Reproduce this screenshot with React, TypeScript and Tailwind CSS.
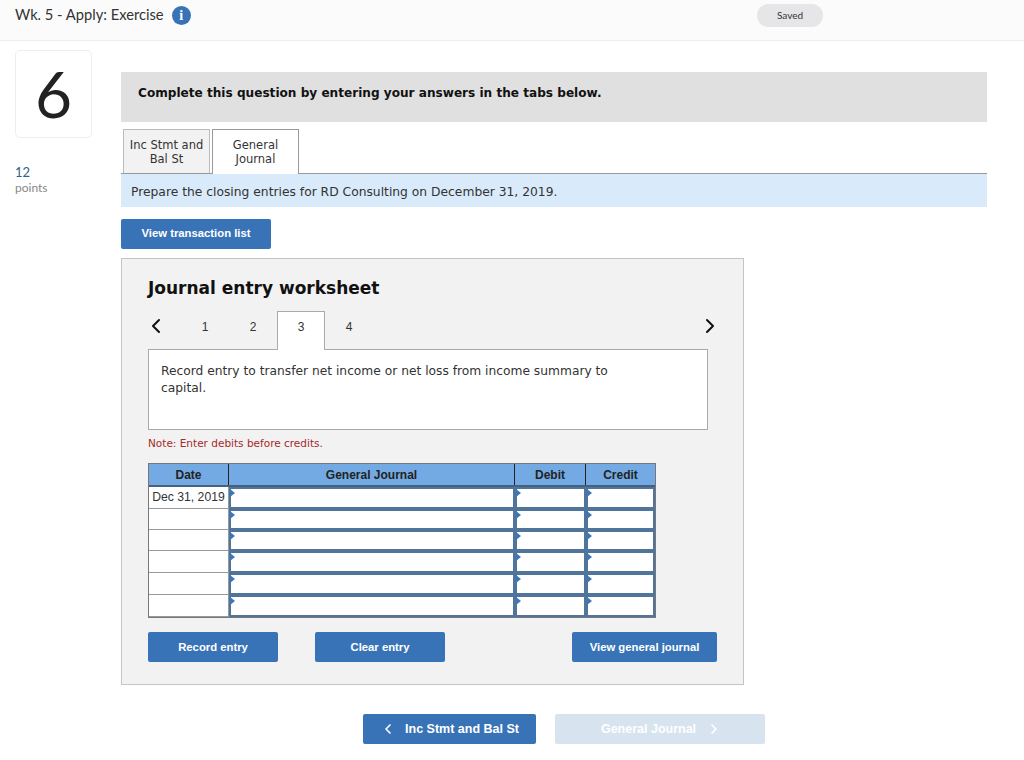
import { ChevronLeft, ChevronRight } from 'lucide-react';

const rows = [
    { date: 'Dec 31, 2019', height: 'h-[22px]' },
    { date: '', height: 'h-[21px]' },
    { date: '', height: 'h-[21px]' },
    { date: '', height: 'h-[22px]' },
    { date: '', height: 'h-[22px]' },
    { date: '', height: 'h-[22px]' },
];

const verdana = "font-['DejaVu_Sans',sans-serif]";
const arial = "font-['Liberation_Sans',sans-serif]";
const lato = "font-['Lato',sans-serif]";

function EntryCell({ width }: { width: string }) {
    return (
        <div className={`relative ${width} h-full bg-white border-2 border-[#4f759c]`}>
            <span className="absolute -left-[1px] top-0 w-0 h-0 border-y-[4px] border-y-transparent border-l-[5px] border-l-[#3b76b8]" />
        </div>
    );
}

function BlueButton({ label, width }: { label: string; width: string }) {
    return (
        <button className={`${width} h-[30px] bg-[#3973b7] rounded-[2px] text-white text-[11.3px] font-bold ${arial}`}>
            {label}
        </button>
    );
}

export default function App() {
    return (
        <div className="w-[1024px] h-[760px] bg-white overflow-hidden text-[#222]">
            {/* TOP BAR */}
            <div className="h-[41px] bg-[#fbfbfb] border-b border-[#eeeeee] flex items-start pl-[15px] pr-[201px]">
                <span className={`${lato} text-[14.7px] leading-[15px] mt-[7px] text-[#333]`}>Wk. 5 - Apply: Exercise</span>
                <span className="ml-[8px] mt-[6px] w-[19px] h-[19px] rounded-full bg-[#3973b7] text-white flex items-center justify-center text-[14px] font-bold font-['Liberation_Serif',serif]">
                    i
                </span>
                <span className={`ml-auto mt-[4px] w-[66px] h-[23px] rounded-full bg-[#e6e5e8] flex items-center justify-center text-[10px] text-[#333] ${lato}`}>
                    Saved
                </span>
            </div>

            <div className="flex">
                {/* LEFT COLUMN */}
                <div className="w-[121px] shrink-0 pl-[15px] pt-[9px]">
                    <div className={`w-[77px] h-[88px] border border-[#eeeeee] rounded-[5px] flex items-center justify-center text-[64px] leading-none text-[#222] ${lato}`}>
                        6
                    </div>
                    <div className={`mt-[26px] text-[13px] leading-[16px] text-[#2d5f8f] ${lato}`}>12</div>
                    <div className={`text-[12px] leading-[16px] text-[#888] ${lato}`}>points</div>
                </div>

                {/* MAIN COLUMN */}
                <div className={`w-[866px] pt-[31px] ${verdana}`}>
                    <div className="h-[50px] bg-[#e0e0e0] flex items-center pl-[17px] pb-[8px] text-[12.1px] font-bold text-[#111]">
                        Complete this question by entering your answers in the tabs below.
                    </div>

                    <div className="flex gap-[2px] pl-[2px] mt-[7px] h-[45px] border-b border-[#999]">
                        <div className="w-[87px] h-[44px] bg-[#f2f2f2] border border-b-0 border-[#bbbbbb] flex items-center justify-center text-center text-[11.5px] leading-[14px] text-[#333]">
                            Inc Stmt and<br />Bal St
                        </div>
                        <div className="w-[87px] h-[45px] bg-white border border-b-0 border-[#999] flex items-center justify-center text-center text-[11.5px] leading-[14px] text-[#333]">
                            General<br />Journal
                        </div>
                    </div>

                    <div className="h-[33px] bg-[#d9ebfa] flex items-center pl-[10px] pt-[4px] text-[12.3px] text-[#333]">
                        Prepare the closing entries for RD Consulting on December 31, 2019.
                    </div>

                    <div className="mt-[12px]">
                        <button className={`w-[150px] h-[30px] pb-[1px] bg-[#3973b7] rounded-[2px] text-white text-[11.3px] font-bold ${arial}`}>
                            View transaction list
                        </button>
                    </div>

                    {/* WORKSHEET */}
                    <div className="mt-[9px] w-[623px] h-[427px] bg-[#f2f2f2] border border-[#c4c4c4] pl-[26px] pr-[35px] pt-[17px]">
                        <h2 className="text-[17px] leading-[24px] font-bold text-[#111]">Journal entry worksheet</h2>

                        <div className={`mt-[11px] h-[39px] flex relative z-10 ${arial} text-[12px] text-[#333]`}>
                            <div className="w-[33px] h-[29px] flex items-center">
                                <ChevronLeft className="w-[24px] h-[24px] -ml-[4px] shrink-0 text-[#111]" strokeWidth={2} />
                            </div>
                            {['1', '2', '3', '4'].map(n => (
                                <div
                                    key={n}
                                    className={
                                        n === '3'
                                            ? 'w-[48px] h-[39px] bg-white border border-b-0 border-[#aaaaaa] flex justify-center pt-[8px] leading-[14px]'
                                            : 'w-[48px] h-[29px] flex justify-center pt-[9px] leading-[14px]'
                                    }
                                >
                                    {n}
                                </div>
                            ))}
                            <div className="ml-auto h-[29px] flex items-center">
                                <ChevronRight className="w-[24px] h-[24px] -mr-[14px] shrink-0 text-[#111]" strokeWidth={2} />
                            </div>
                        </div>

                        <div className="-mt-[1px] w-[560px] h-[81px] bg-white border border-[#aaaaaa] pl-[12px] pt-[13px] pr-[90px] text-[12.25px] leading-[17px] text-[#333]">
                            Record entry to transfer net income or net loss from income summary to capital.
                        </div>

                        <div className="mt-[6px] text-[10.5px] leading-[14px] text-[#a52a2a]">Note: Enter debits before credits.</div>

                        {/* TABLE */}
                        <div className={`mt-[13px] w-[508px] border border-[#777] ${arial}`}>
                            <div className="flex h-[23px] bg-[#74aae3] text-[12px] font-bold text-[#222] border-b-2 border-[#44617f]">
                                <div className="w-[80px] flex items-center justify-center border-r border-[#222]">Date</div>
                                <div className="w-[286px] flex items-center justify-center border-r border-[#222]">General Journal</div>
                                <div className="w-[71px] flex items-center justify-center border-r border-[#222]">Debit</div>
                                <div className="flex-1 flex items-center justify-center">Credit</div>
                            </div>
                            {rows.map((row, i) => (
                                <div key={i} className={`flex ${row.height}`}>
                                    <div className="w-[80px] h-full bg-white border-r border-b border-[#999] flex items-center justify-center text-[12.2px] text-[#333]">
                                        {row.date}
                                    </div>
                                    <EntryCell width="w-[286px]" />
                                    <EntryCell width="w-[71px]" />
                                    <EntryCell width="flex-1" />
                                </div>
                            ))}
                        </div>

                        <div className="mt-[14px] w-[569px] flex">
                            <BlueButton label="Record entry" width="w-[130px]" />
                            <div className="ml-[37px]">
                                <BlueButton label="Clear entry" width="w-[130px]" />
                            </div>
                            <div className="ml-auto">
                                <BlueButton label="View general journal" width="w-[145px]" />
                            </div>
                        </div>
                    </div>

                    {/* BOTTOM NAV */}
                    <div className={`mt-[29px] ml-[242px] flex gap-[19px] ${arial} text-[12.5px] font-bold text-white`}>
                        <button className="w-[173px] h-[30px] bg-[#3973b7] rounded-[2px] flex items-center justify-center gap-[9px]">
                            <ChevronLeft className="w-[16px] h-[16px]" strokeWidth={2.5} />
                            Inc Stmt and Bal St
                        </button>
                        <button className="w-[210px] h-[30px] pl-[3px] bg-[#d8e3f0] rounded-[2px] flex items-center justify-center gap-[10px]">
                            General Journal
                            <ChevronRight className="w-[16px] h-[16px]" strokeWidth={2.5} />
                        </button>
                    </div>
                </div>
            </div>
        </div>
    );
}
